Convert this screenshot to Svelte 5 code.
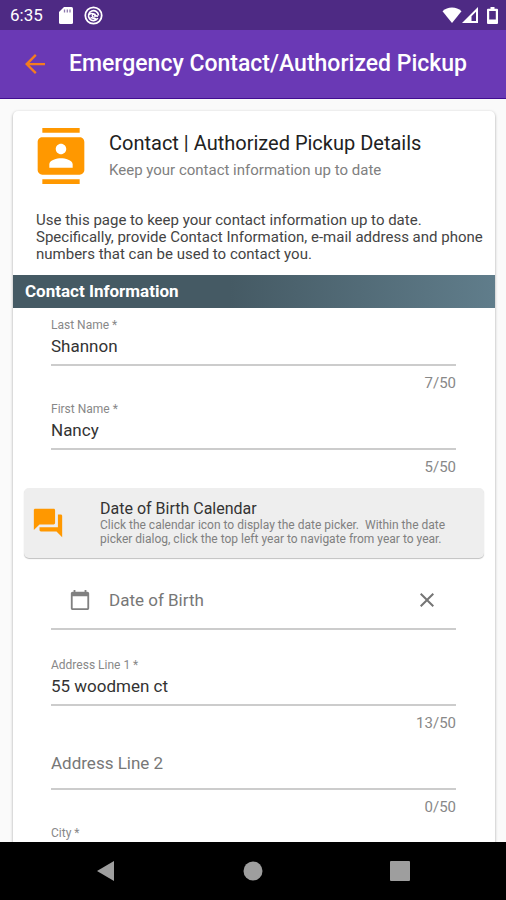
<script>
  let names = $state([
    { id: 'lastName', label: 'Last Name *', value: 'Shannon', max: 50 },
    { id: 'firstName', label: 'First Name *', value: 'Nancy', max: 50 }
  ])
  let address = $state([
    { id: 'address1', label: 'Address Line 1 *', value: '55 woodmen ct', max: 50 },
    { id: 'address2', label: 'Address Line 2', value: '', max: 50 },
    { id: 'city', label: 'City *', value: '', float: true }
  ])
  let birthDate = $state('')
</script>

{#snippet textField(field)}
  <div class="field">
    <div class="control" class:empty={!field.value && !field.float}>
      <label for={field.id}>{field.label}</label>
      <input id={field.id} type="text" maxlength={field.max} bind:value={field.value} />
    </div>
    {#if field.max}
      <div class="counter">{field.value.length}/{field.max}</div>
    {/if}
  </div>
{/snippet}

<div class="screen">
  <div class="status">
    <span class="time">6:35</span>
    <svg class="sd" width="14" height="17" viewBox="0 0 14 17">
      <path fill="#fff" d="M5 0h7.500q1.500 0 1.500 1.500v14q0 1.500-1.500 1.500h-11q-1.500 0-1.500-1.500V5z" />
      <path stroke="#8d79ad" stroke-width="1.300" d="M5.500 2.500v3M8.300 2.500v3M11 2.500v3" />
    </svg>
    <svg width="19" height="19" viewBox="0 0 19 19" fill="none" stroke="#fff">
      <circle cx="9.500" cy="9.500" r="8.200" stroke-width="1.800" />
      <path stroke-width="1.600" d="M13.800 12.200A5 5 0 1 1 14.500 9.500M5 8.500q3-2 5 0t4 1.500M6.500 11.500l5.500 1.500" />
      <circle cx="9.800" cy="9.600" r="1.600" stroke-width="1.300" />
    </svg>
    <span class="spacer"></span>
    <svg width="20" height="16" viewBox="0 0 20 16">
      <path fill="#fff" d="M10 16 .5 4.200Q4.500.5 10 .5t9.500 3.700z" />
    </svg>
    <svg width="16" height="16" viewBox="0 0 16 16">
      <path fill="#fff" fill-rule="evenodd" d="M16 0v16H0zM14 4.800 9.500 9.300V14H14z" />
    </svg>
    <svg class="battery" width="11" height="17" viewBox="0 0 11 17">
      <path fill="#fff" fill-rule="evenodd" d="M3.500 0h4v1.800H10q1 0 1 1V16q0 1-1 1H1q-1 0-1-1V2.800q0-1 1-1h2.500zM2.200 4v8.500h6.600V4z" />
    </svg>
  </div>

  <header>
    <button class="back" aria-label="Back">
      <svg width="20" height="20" viewBox="4 4 16 16">
        <path fill="#f57c1f" d="M20 11.100H7.600l5.700-5.700L12 4l-8 8 8 8 1.300-1.400-5.700-5.700H20z" />
      </svg>
    </button>
    <h1>Emergency Contact/Authorized Pickup</h1>
  </header>

  <main>
    <div class="card">
      <div class="intro">
        <svg width="56" height="56" viewBox="0 0 24 24">
          <path fill="#ff9800" d="M20 0H4v2h16V0zM4 24h16v-2H4v2zM20 4H4c-1.100 0-2 .9-2 2v12c0 1.100.9 2 2 2h16c1.100 0 2-.9 2-2V6c0-1.100-.9-2-2-2zm-8 2.750c1.240 0 2.250 1.010 2.250 2.250s-1.010 2.250-2.250 2.250S9.750 10.240 9.750 9 10.760 6.750 12 6.750zM17 17H7v-1.500c0-1.670 3.330-2.500 5-2.500s5 .83 5 2.500V17z" />
        </svg>
        <div>
          <h2>Contact | Authorized Pickup Details</h2>
          <p>Keep your contact information up to date</p>
        </div>
      </div>
      <p class="description">
        Use this page to keep your contact information up to date. Specifically, provide Contact
        Information, e-mail address and phone numbers that can be used to contact you.
      </p>
      <h3>Contact Information</h3>

      <form>
        {#each names as field (field.id)}
          {@render textField(field)}
        {/each}

        <div class="hint">
          <svg width="34" height="34" viewBox="0 0 24 24">
            <path fill="#ff9800" d="M21 6h-2v9H6v2c0 .55.45 1 1 1h11l4 4V7c0-.55-.45-1-1-1zm-4 6V3c0-.55-.45-1-1-1H3c-.55 0-1 .45-1 1v14l4-4h10c.55 0 1-.45 1-1z" />
          </svg>
          <div>
            <h4>Date of Birth Calendar</h4>
            <p>
              Click the calendar icon to display the date picker.&nbsp; Within the date picker dialog,
              click the top left year to navigate from year to year.
            </p>
          </div>
        </div>

        <div class="date">
          <button type="button" aria-label="Open calendar">
            <svg width="22" height="22" viewBox="0 0 24 24">
              <path fill="#808080" d="M20 3h-1V1h-2v2H7V1H5v2H4c-1.100 0-2 .9-2 2v16c0 1.100.9 2 2 2h16c1.100 0 2-.9 2-2V5c0-1.100-.9-2-2-2zm0 18H4V8h16v13z" />
            </svg>
          </button>
          <input type="text" aria-label="Date of Birth" placeholder="Date of Birth" bind:value={birthDate} />
          <button type="button" aria-label="Clear date" onclick={() => (birthDate = '')}>
            <svg width="24" height="24" viewBox="0 0 24 24">
              <path fill="#757575" d="M19 6.410 17.590 5 12 10.590 6.410 5 5 6.410 10.590 12 5 17.590 6.410 19 12 13.410 17.590 19 19 17.590 13.410 12z" />
            </svg>
          </button>
        </div>

        {#each address as field (field.id)}
          {@render textField(field)}
        {/each}
      </form>
    </div>
  </main>

  <nav>
    <button aria-label="Back">
      <svg width="20" height="22" viewBox="0 0 20 22"><path fill="#9e9e9e" d="M18 1v20L1 11z" /></svg>
    </button>
    <button aria-label="Home">
      <svg width="20" height="20" viewBox="0 0 20 20"><circle cx="10" cy="10" r="9.500" fill="#9e9e9e" /></svg>
    </button>
    <button aria-label="Recent apps">
      <svg width="20" height="20" viewBox="0 0 20 20"><rect width="20" height="20" rx="1" fill="#9e9e9e" /></svg>
    </button>
  </nav>
</div>

<style>
  :global(body) {
    margin: 0;
  }
  .screen {
    display: flex;
    flex-direction: column;
    height: 100vh;
    background: #fafafa;
    color: #333;
    font-family: Roboto, sans-serif;
  }
  h1,
  h2,
  h3,
  h4,
  p {
    margin: 0;
    font-weight: 400;
  }
  svg {
    display: block;
    flex: none;
  }
  button {
    padding: 0;
    border: 0;
    background: none;
    cursor: pointer;
  }
  input {
    min-width: 0;
    padding: 0;
    border: 0;
    outline: none;
    background: none;
    color: #333;
    font: inherit;
  }

  .status {
    display: flex;
    flex: none;
    align-items: center;
    height: 30px;
    padding: 0 8px 0 10px;
    background: #4e2a84;
    color: #fff;
  }
  .time {
    margin-right: 16px;
    font-size: 17px;
    line-height: 30px;
  }
  .sd {
    margin-right: 11px;
  }
  .spacer {
    flex: 1;
  }
  .battery {
    margin-left: 9px;
  }

  header {
    display: flex;
    flex: none;
    align-items: center;
    height: 68px;
    padding-left: 25px;
    border-bottom: 1px solid #420d91;
    background: #6a39b5;
  }
  .back {
    margin-right: 24px;
  }
  h1 {
    color: #fff;
    font-size: 23px;
    font-weight: 500;
    line-height: 28px;
    white-space: nowrap;
  }

  main {
    flex: 1;
    min-height: 0;
    overflow: hidden;
    padding: 12px 11px 0 13px;
  }
  .card {
    border-radius: 5px;
    background: #fff;
    box-shadow: 0 1px 3px rgba(0, 0, 0, 0.35);
  }
  .intro {
    display: flex;
    gap: 20px;
    padding: 17px 20px 0;
  }
  h2 {
    margin-top: 3px;
    color: #212121;
    font-size: 20px;
    line-height: 24px;
    white-space: nowrap;
  }
  .intro p {
    margin-top: 6px;
    color: #808080;
    font-size: 15px;
    line-height: 18px;
  }
  .description {
    padding: 28px 8px 12px 23px;
    color: #444;
    font-size: 15px;
    line-height: 17px;
  }
  h3 {
    padding-left: 12px;
    background: linear-gradient(90deg, #455a64 45%, #607d8b);
    color: #fff;
    font-size: 17px;
    font-weight: 700;
    line-height: 33px;
  }

  form {
    padding-top: 10px;
  }
  .field {
    margin: 0 39px 10px 38px;
  }
  .control {
    display: grid;
    height: 41px;
    padding-bottom: 5px;
    border-bottom: 2px solid #ccc;
  }
  .control label,
  .control input {
    grid-area: 1 / 1;
  }
  .control label {
    align-self: start;
    color: #888;
    font-size: 12px;
    line-height: 14px;
  }
  .control input {
    align-self: end;
    height: 26px;
    font-size: 17px;
  }
  .empty label {
    align-self: center;
    color: #777;
    font-size: 17px;
    line-height: 20px;
  }
  .counter {
    margin-top: 8px;
    color: #888;
    font-size: 15px;
    line-height: 18px;
    text-align: right;
  }

  .hint {
    display: flex;
    align-items: center;
    gap: 35px;
    min-height: 70px;
    margin: 12px 11px 0;
    padding: 0 20px 0 7px;
    border-radius: 5px;
    background: #eee;
    box-shadow: 0 1px 1px rgba(0, 0, 0, 0.25);
  }
  h4 {
    font-size: 16px;
    line-height: 18px;
  }
  .hint p {
    color: #808080;
    font-size: 12px;
    line-height: 14px;
  }

  .date {
    display: flex;
    align-items: center;
    height: 56px;
    margin: 14px 39px 28px 38px;
    padding: 0 17px 0 18px;
    border-bottom: 2px solid #ccc;
  }
  .date input {
    flex: 1;
    margin: 0 17px 0 18px;
    font-size: 17px;
  }
  .date input::placeholder {
    color: #777;
    opacity: 1;
  }

  nav {
    display: flex;
    flex: none;
    align-items: center;
    justify-content: space-between;
    height: 58px;
    padding: 0 19%;
    background: #000;
  }
</style>
